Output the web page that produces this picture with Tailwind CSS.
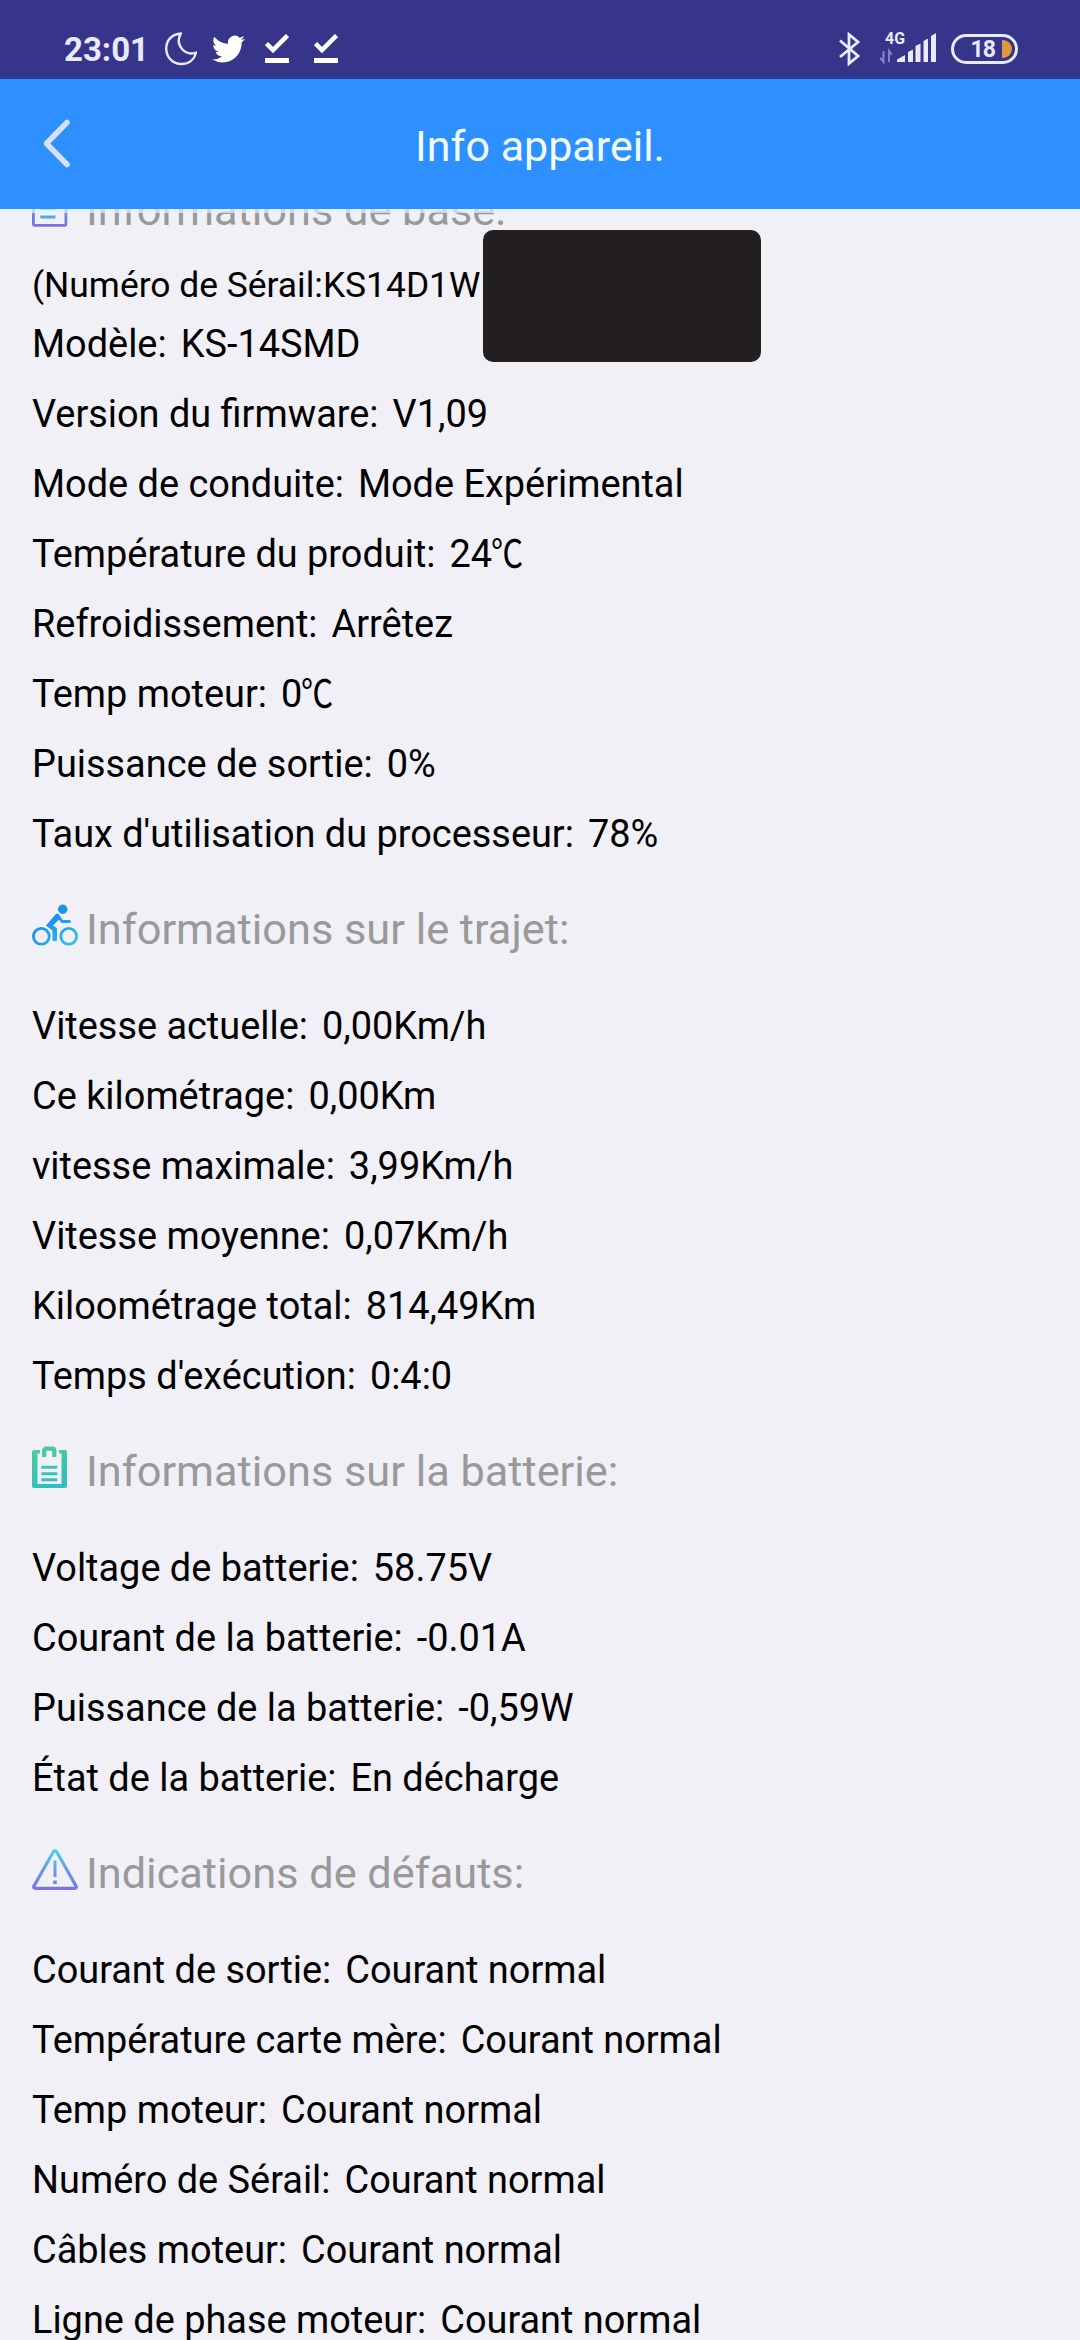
<!DOCTYPE html>
<html lang="fr">
<head>
  <meta charset="UTF-8">
  <meta name="viewport" content="width=device-width, initial-scale=1.0">
  <title>Info appareil.</title>
  <script src="https://cdn.jsdelivr.net/npm/@tailwindcss/browser@4"></script>
</head>
<body class="bg-[#f1f0f6] h-[2340px] overflow-hidden font-['Roboto','Noto_Sans_CJK_SC',sans-serif] text-black">

  <div class="relative z-10">
    <!-- status bar -->
    <div class="h-[79px] bg-[#36358a] border-b-2 border-[#2b3f9b] pl-[64px] pr-[62px] pt-[21px] flex items-center justify-between">
      <div class="flex items-center">
        <span class="w-[101px] pt-[2px] text-[33px] leading-[40px] font-bold text-[#e9e9ff]">23:01</span>
        <svg class="w-[32px] h-[34px]" viewBox="0 0 32 34" fill="none" stroke="#e9e9ff" stroke-width="2.4" stroke-linejoin="round">
          <path d="M16 1.5C7 2 1.2 8.5 1.2 16.5C1.2 25.5 8 32 16.5 32C24 32 29.5 27.500 31 20.500C27 22 21.500 21.500 17.500 17.500C13 13 12.500 6.500 16 1.500Z"/>
        </svg>
        <svg class="w-[33px] h-[34px] ml-[15px]" viewBox="0 0 24 24" fill="#ffffff">
          <path d="M23.953 4.570a10 10 0 01-2.825.775 4.958 4.958 0 002.163-2.723c-.951.555-2.005.959-3.127 1.184a4.920 4.920 0 00-8.384 4.482C7.690 8.095 4.067 6.130 1.640 3.162a4.822 4.822 0 00-.666 2.475c0 1.710.870 3.213 2.188 4.096a4.904 4.904 0 01-2.228-.616v.060a4.923 4.923 0 003.946 4.827 4.996 4.996 0 01-2.212.085 4.936 4.936 0 004.604 3.417 9.867 9.867 0 01-6.102 2.105c-.390 0-.779-.023-1.170-.067a13.995 13.995 0 007.557 2.209c9.053 0 13.998-7.496 13.998-13.985 0-.210 0-.420-.015-.630A9.935 9.935 0 0024 4.590z"/>
        </svg>
        <svg class="w-[24px] h-[30px] ml-[20px]" viewBox="0 0 24 30">
          <path d="M1.500 9.500L8 16L22.500 1.500" fill="none" stroke="#fff" stroke-width="4.500"/>
          <rect y="24" width="24" height="5" fill="#fff"/>
        </svg>
        <svg class="w-[24px] h-[30px] ml-[25px]" viewBox="0 0 24 30">
          <path d="M1.500 9.500L8 16L22.500 1.500" fill="none" stroke="#fff" stroke-width="4.500"/>
          <rect y="24" width="24" height="5" fill="#fff"/>
        </svg>
      </div>
      <div class="flex items-center">
        <svg class="w-[21px] h-[34px]" viewBox="0 0 21 34" fill="none" stroke="#e9e9ff" stroke-width="2.800">
          <path d="M1 8.500L19 24L10 31.500V2.500L19 10L1 25"/>
        </svg>
        <!-- mobile network -->
        <svg class="w-[58px] h-[34px] ml-[20px]" viewBox="0 0 58 34" fill="#e9e9ff">
          <text x="5" y="12" font-size="16" font-weight="700" textLength="20" lengthAdjust="spacingAndGlyphs">4G</text>
          <path d="M3.500 19V30L0 25.500M9 30V19L12 23" fill="none" stroke="#8583c4" stroke-width="2"/>
          <path d="M17 30V27.500L25 23V30ZM28 30V20L33 17.500V30ZM35.500 30V14L40.500 11.500V30ZM43.500 30V9L48 6.500V30ZM51 30V4L56 1V30Z"/>
        </svg>
        <div class="w-[67px] h-[30px] ml-[13px] border-[3px] border-[#e9e9ff] rounded-full flex items-center justify-end pr-[3px]">
          <span class="text-[23px] leading-none font-bold text-[#e9e9ff] tracking-[-1px]">18</span>
          <span class="w-[10px] h-[18px] ml-[7px] bg-[#dc9a3c] rounded-r-full"></span>
        </div>
      </div>
    </div>

    <!-- title bar -->
    <div class="h-[130px] bg-[#2e8fff] flex items-center">
      <svg class="w-[30px] h-[50px] ml-[42px] mb-[2px]" viewBox="0 0 30 50" fill="none" stroke="#d5e0ff" stroke-width="5.500" stroke-linecap="round" stroke-linejoin="round">
        <path d="M25 4.500L4.500 25.500L25 46.500"/>
      </svg>
      <h1 class="flex-1 mr-[72px] pt-[4px] text-center text-[43px] leading-[64px] text-[#f0fcff]">Info appareil.</h1>
    </div>
    <div class="absolute left-0 top-[209px] w-full h-[4px] bg-[#e2f4ff]/70"></div>
    <div class="absolute left-[483px] top-[230px] w-[278px] h-[132px] bg-[#231f20] rounded-[10px]"></div>
  </div>

  <main class="-mt-[59px] pl-[32px] text-[37.9px] leading-[70px] whitespace-nowrap">
    <section>
      <h2 class="flex h-[122px] text-[43.3px] leading-[122px] text-[#999999]">
        <svg class="w-[46px] h-[46px] mt-[34px] mr-[8px]" viewBox="0 0 46 46" fill="none" stroke-width="2.800">
          <defs>
            <linearGradient id="doc" x1="0" y1="0" x2="0" y2="1"><stop offset="0" stop-color="#4fb8e8"/><stop offset="1" stop-color="#7a74d6"/></linearGradient>
          </defs>
          <rect x="1.400" y="2" width="32.500" height="39.300" rx="1" stroke="url(#doc)"/>
          <path d="M8.300 16H23.500M8.300 24.700H23.500M8.300 33H23.500" stroke="#45b0e6"/>
        </svg>
        Informations de base:
      </h2>
      <p class="h-[37px] text-[35.4px] leading-[27px]">(Numéro de Sérail:KS14D1W</p>
      <p><span class="mr-[14px]">Modèle:</span><span>KS-14SMD</span></p>
      <p><span class="mr-[14px]">Version du firmware:</span><span>V1,09</span></p>
      <p><span class="mr-[14px]">Mode de conduite:</span><span>Mode Expérimental</span></p>
      <p><span class="mr-[14px]">Température du produit:</span><span>24<span class="inline-block origin-left scale-x-85 -ml-px">℃</span></span></p>
      <p><span class="mr-[14px]">Refroidissement:</span><span>Arrêtez</span></p>
      <p><span class="mr-[14px]">Temp moteur:</span><span>0<span class="inline-block origin-left scale-x-85 -ml-px">℃</span></span></p>
      <p><span class="mr-[14px]">Puissance de sortie:</span><span>0%</span></p>
      <p><span class="mr-[14px]">Taux d'utilisation du processeur:</span><span>78%</span></p>
    </section>

    <section>
      <h2 class="flex h-[122px] text-[43.3px] leading-[122px] text-[#999999]">
        <svg class="w-[46px] h-[48px] mt-[34px] mr-[8px]" viewBox="0 0 46 48" fill="none">
          <defs>
            <linearGradient id="bike" gradientUnits="userSpaceOnUse" x1="14" y1="6" x2="42" y2="42"><stop offset="0.300" stop-color="#1a94f0"/><stop offset="1" stop-color="#35c5dc"/></linearGradient>
          </defs>
          <circle cx="9.300" cy="33.300" r="7.900" stroke="url(#bike)" stroke-width="2.800"/>
          <circle cx="36.700" cy="33.300" r="7.900" stroke="url(#bike)" stroke-width="2.800"/>
          <circle cx="30.700" cy="6.300" r="4.700" fill="#1a94f0"/>
          <path d="M25.500 12L30 18.500H37.500" stroke="url(#bike)" stroke-width="3" stroke-linecap="round" stroke-linejoin="round"/>
          <path d="M24.500 11L14.500 22.500L21 27.500V37.500H24.500V25.500L20.500 22.500L28 15Z" fill="url(#bike)" stroke="url(#bike)" stroke-linejoin="round"/>
        </svg>
        Informations sur le trajet:
      </h2>
      <p><span class="mr-[14px]">Vitesse actuelle:</span><span>0,00Km/h</span></p>
      <p><span class="mr-[14px]">Ce kilométrage:</span><span>0,00Km</span></p>
      <p><span class="mr-[14px]">vitesse maximale:</span><span>3,99Km/h</span></p>
      <p><span class="mr-[14px]">Vitesse moyenne:</span><span>0,07Km/h</span></p>
      <p><span class="mr-[14px]">Kiloométrage total:</span><span>814,49Km</span></p>
      <p><span class="mr-[14px]">Temps d'exécution:</span><span>0:4:0</span></p>
    </section>

    <section>
      <h2 class="flex h-[122px] text-[43.3px] leading-[122px] text-[#999999]">
        <svg class="w-[46px] h-[48px] mt-[34px] mr-[8px]" viewBox="0 0 46 48" fill="none">
          <defs>
            <linearGradient id="clip" gradientUnits="userSpaceOnUse" x1="8" y1="4" x2="28" y2="46"><stop offset="0" stop-color="#4ccb9a"/><stop offset="1" stop-color="#2cbccb"/></linearGradient>
          </defs>
          <path d="M2 5H8V8.500H5.500V39H29.500V8.500H27V5H33Q35 5 35 7V41Q35 43 33 43H2Q0 43 0 41V7Q0 5 2 5Z" fill="url(#clip)"/>
          <path d="M12.200 12V5.500Q12.200 3.700 14 3.700H20.500Q22.300 3.700 22.300 5.500V12" stroke="url(#clip)" stroke-width="4.200"/>
          <path d="M9.300 22.300H25.300M9.300 28.700H25.300M9.300 34.700H25.300" stroke="url(#clip)" stroke-width="2.900"/>
        </svg>
        Informations sur la batterie:
      </h2>
      <p><span class="mr-[14px]">Voltage de batterie:</span><span>58.75V</span></p>
      <p><span class="mr-[14px]">Courant de la batterie:</span><span>-0.01A</span></p>
      <p><span class="mr-[14px]">Puissance de la batterie:</span><span>-0,59W</span></p>
      <p><span class="mr-[14px]">État de la batterie:</span><span>En décharge</span></p>
    </section>

    <section>
      <h2 class="flex h-[122px] text-[43.3px] leading-[122px] text-[#999999]">
        <svg class="w-[46px] h-[48px] mt-[34px] mr-[8px]" viewBox="0 0 46 48" fill="none">
          <defs>
            <linearGradient id="warn" gradientUnits="userSpaceOnUse" x1="0" y1="2" x2="0" y2="44"><stop offset="0" stop-color="#4fd6dc"/><stop offset="0.500" stop-color="#6a9be6"/><stop offset="1" stop-color="#7a6ee6"/></linearGradient>
          </defs>
          <path d="M21.500 4.500Q23 2.500 24.500 4.500L44 39Q45 41.300 42.500 41.300H3.500Q1 41.300 2 39Z" stroke="url(#warn)" stroke-width="3.200" stroke-linejoin="round"/>
          <path d="M21.500 13.500H24.500V30H21.500ZM21.200 33.500H24.800V37H21.200Z" fill="url(#warn)"/>
        </svg>
        Indications de défauts:
      </h2>
      <p><span class="mr-[14px]">Courant de sortie:</span><span>Courant normal</span></p>
      <p><span class="mr-[14px]">Température carte mère:</span><span>Courant normal</span></p>
      <p><span class="mr-[14px]">Temp moteur:</span><span>Courant normal</span></p>
      <p><span class="mr-[14px]">Numéro de Sérail:</span><span>Courant normal</span></p>
      <p><span class="mr-[14px]">Câbles moteur:</span><span>Courant normal</span></p>
      <p><span class="mr-[14px]">Ligne de phase moteur:</span><span>Courant normal</span></p>
    </section>
  </main>
</body>
</html>
